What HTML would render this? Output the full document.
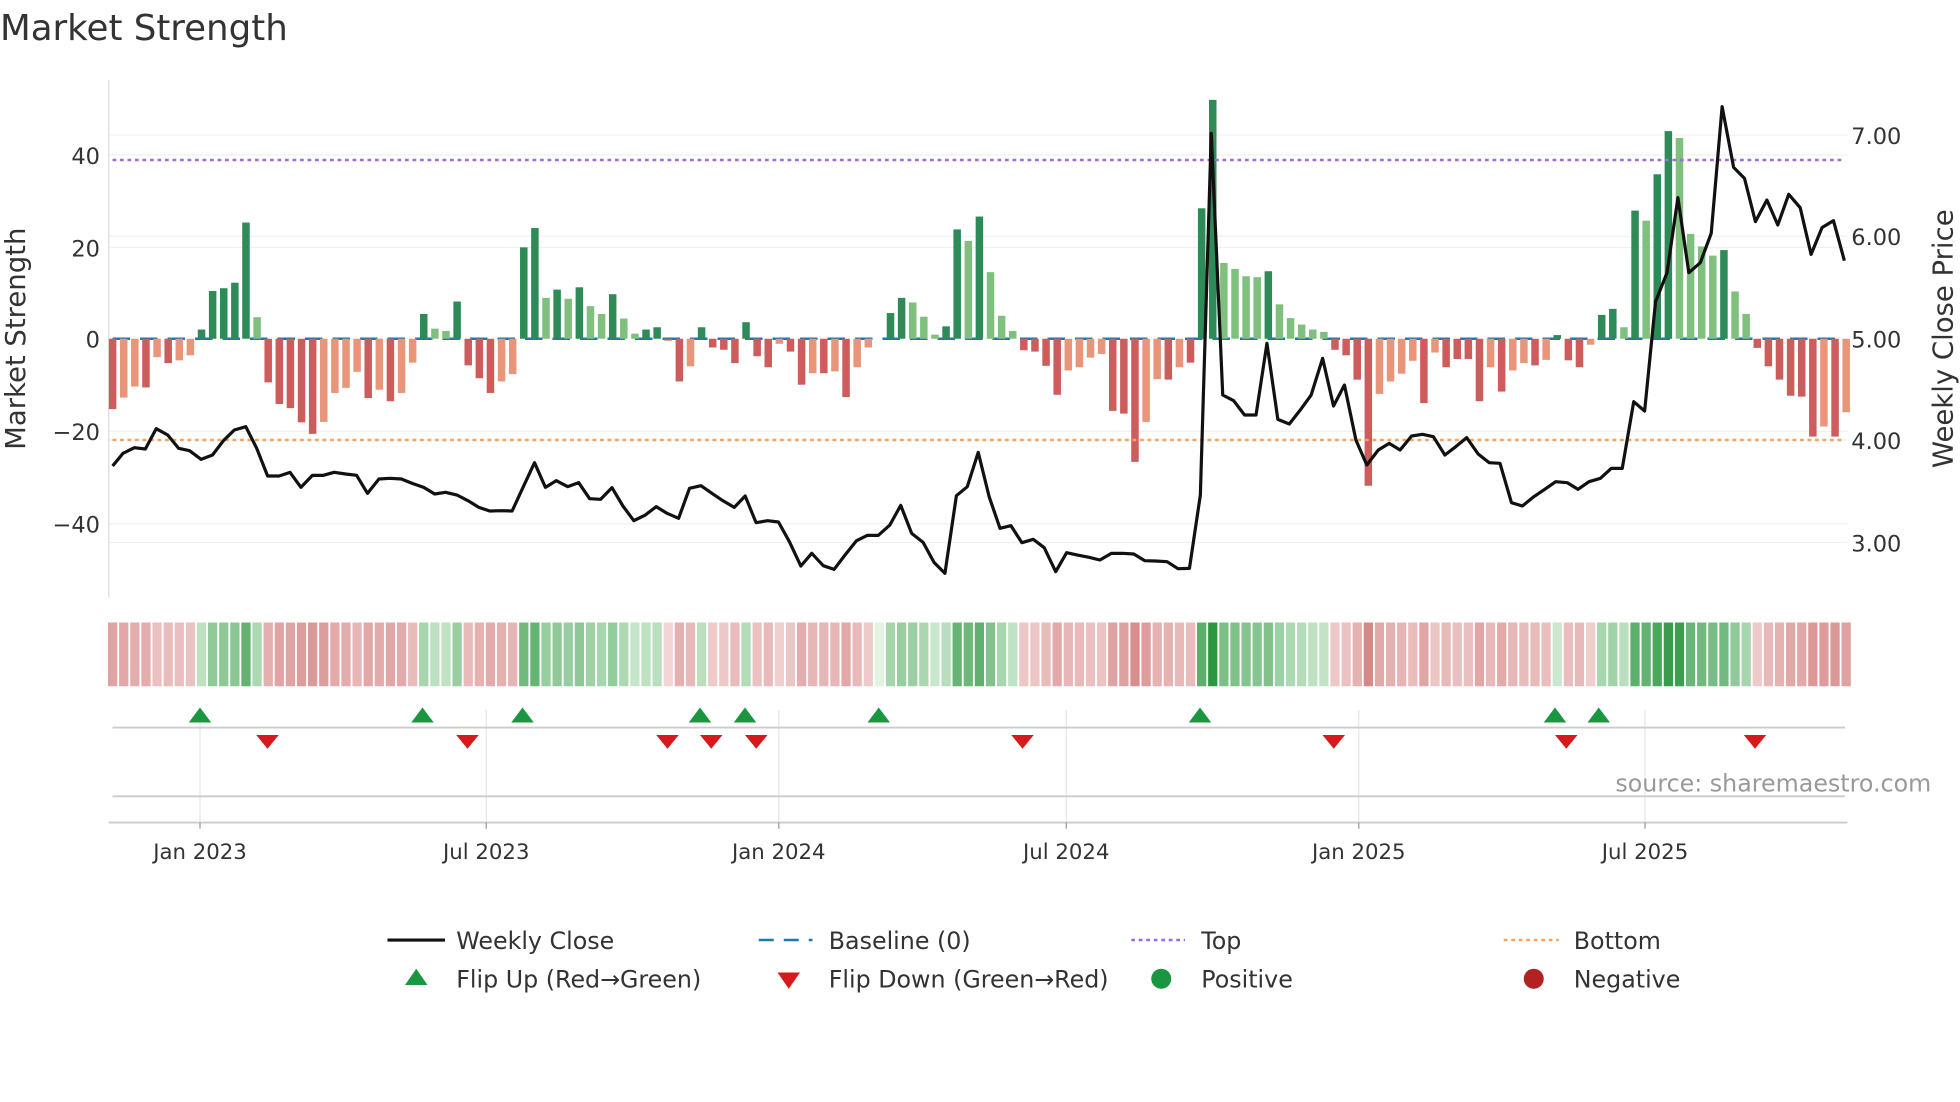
<!DOCTYPE html>
<html><head><meta charset="utf-8"><style>
html,body{margin:0;padding:0;background:#fff;}
svg{display:block;font-family:"DejaVu Sans","Liberation Sans",sans-serif;}
</style></head><body>
<svg id="s" width="1960" height="1102" viewBox="0 0 1568 881.6" xmlns="http://www.w3.org/2000/svg">
<text x="0" y="32" font-size="28.5" fill="#333">Market Strength</text>
<g stroke="#eef0f3" stroke-width="1">
<line x1="87" x2="1478" y1="124" y2="124"/><line x1="87" x2="1478" y1="198" y2="198"/>
<line x1="87" x2="1478" y1="345" y2="345"/><line x1="87" x2="1478" y1="419" y2="419"/>
<line x1="87" x2="1478" y1="189" y2="189"/><line x1="87" x2="1478" y1="352" y2="352"/>
<line x1="87" x2="1478" y1="434" y2="434"/><line x1="87" x2="1478" y1="108" y2="108"/>
</g>
<line x1="87" x2="87" y1="64" y2="478" stroke="#ddd"/>
<g font-size="18" fill="#333" text-anchor="end">
<text x="80" y="131">40</text><text x="80" y="205">20</text><text x="80" y="278">0</text>
<text x="80" y="352">−20</text><text x="80" y="426">−40</text></g>
<g font-size="18" fill="#333">
<text x="1481" y="115">7.00</text><text x="1481" y="196">6.00</text><text x="1481" y="278">5.00</text>
<text x="1481" y="359">4.00</text><text x="1481" y="441">3.00</text></g>
<text transform="translate(20,271) rotate(-90)" font-size="22" fill="#333" text-anchor="middle">Market Strength</text>
<text transform="translate(1562,271) rotate(-90)" font-size="22" fill="#333" text-anchor="middle">Weekly Close Price</text>
<line x1="90" x2="1476" y1="271" y2="271" stroke="#1f77b4" stroke-width="2" stroke-dasharray="14,8"/>
<g id="bars"></g>
<line x1="90" x2="1476" y1="128" y2="128" stroke="#9b6be0" stroke-width="2" stroke-dasharray="3,3"/>
<line x1="90" x2="1476" y1="352" y2="352" stroke="#f4a460" stroke-width="2" stroke-dasharray="3,3"/>
<g fill="none" stroke="#111" stroke-width="3.2" stroke-linejoin="round">
<polyline transform="translate(80,64) scale(0.4592,0.26667)" vector-effect="non-scaling-stroke" points="22,1158 40,1120 60,1103 79,1107 98,1046 118,1065 137,1105 156,1112 176,1138 196,1125 215,1082 234,1050 254,1040 273,1105 292,1188 312,1188 331,1177 350,1222 370,1186 389,1186 408,1177 428,1182 447,1186 466,1240 486,1197 505,1195 525,1197 544,1210 564,1222 583,1242 602,1237 622,1245 641,1262 660,1282 679,1293 699,1292 718,1293 737,1222 757,1148 776,1222 795,1202 815,1220 834,1208 853,1256 872,1258 892,1223 911,1278 930,1322 950,1305 969,1280 988,1300 1008,1315 1027,1225 1047,1217 1066,1240 1085,1262 1105,1282 1124,1248 1143,1328 1163,1322 1182,1326 1201,1385 1221,1458 1240,1420 1260,1457 1279,1468 1298,1425 1318,1382 1337,1366 1356,1366 1376,1335 1395,1276 1414,1360 1434,1387 1453,1447 1472,1480 1492,1247 1511,1220 1530,1117 1549,1250 1568,1345 1587,1337 1606,1388 1626,1378 1645,1403 1665,1475 1684,1418 1703,1425 1723,1432 1742,1440 1762,1420 1781,1420 1801,1422 1820,1442 1839,1443 1859,1445 1878,1466 1898,1465 1917,1245 1936,160 1956,945 1975,962 1994,1005 2014,1005 2033,790 2052,1018 2072,1032 2091,990 2110,945 2130,835 2149,978 2168,915 2188,1080 2207,1155 2227,1110 2246,1090 2265,1110 2285,1068 2304,1063 2323,1070 2343,1125 2362,1100 2381,1073 2401,1122 2420,1148 2439,1150 2459,1268 2478,1278 2498,1250 2517,1228 2536,1205 2556,1208 2575,1228 2594,1205 2614,1195 2633,1165 2652,1165 2672,965 2691,993 2710,665 2730,578 2749,353 2768,578 2788,548 2807,460 2826,80 2846,262 2865,295 2884,425 2904,360 2923,435 2942,343 2962,383 2981,523 3000,443 3020,422 3039,542"/>
</g>
<g id="heat"></g>
<g stroke="#e6e6e6" stroke-width="1">
<line x1="160" x2="160" y1="568" y2="658"/><line x1="389" x2="389" y1="568" y2="658"/>
<line x1="623" x2="623" y1="568" y2="658"/><line x1="853" x2="853" y1="568" y2="658"/>
<line x1="1087" x2="1087" y1="568" y2="658"/><line x1="1316" x2="1316" y1="568" y2="658"/>
</g>
<line x1="90" x2="1476" y1="582" y2="582" stroke="#ccc" stroke-width="1.5"/>
<line x1="90" x2="1476" y1="637" y2="637" stroke="#ccc" stroke-width="1.5"/>
<line x1="87" x2="1478" y1="658" y2="658" stroke="#ccc" stroke-width="1.5"/>
<g id="flips"></g>
<text x="1545" y="633" font-size="19" fill="#999" text-anchor="end">source: sharemaestro.com</text>
<g stroke="#999"><line x1="160" x2="160" y1="658" y2="663"/><line x1="389" x2="389" y1="658" y2="663"/><line x1="623" x2="623" y1="658" y2="663"/><line x1="853" x2="853" y1="658" y2="663"/><line x1="1087" x2="1087" y1="658" y2="663"/><line x1="1316" x2="1316" y1="658" y2="663"/></g>
<g font-size="17" fill="#333" text-anchor="middle">
<text x="160" y="687">Jan 2023</text><text x="389" y="687">Jul 2023</text><text x="623" y="687">Jan 2024</text>
<text x="853" y="687">Jul 2024</text><text x="1087" y="687">Jan 2025</text><text x="1316" y="687">Jul 2025</text></g>
<g font-size="19" fill="#333">
<line x1="310" x2="356" y1="752" y2="752" stroke="#111" stroke-width="2.5"/><text x="365" y="759">Weekly Close</text>
<line x1="607" x2="650" y1="752" y2="752" stroke="#1f77b4" stroke-width="2" stroke-dasharray="12,8"/><text x="663" y="759">Baseline (0)</text>
<line x1="905" x2="948" y1="752" y2="752" stroke="#9b6be0" stroke-width="2" stroke-dasharray="3,3"/><text x="961" y="759">Top</text>
<line x1="1203" x2="1247" y1="752" y2="752" stroke="#f4a460" stroke-width="2" stroke-dasharray="3,3"/><text x="1259" y="759">Bottom</text>
<polygon points="324,788 342,788 333,775" fill="#1a9641"/><text x="365" y="790">Flip Up (Red→Green)</text>
<polygon points="622,778 640,778 631,791" fill="#d7191c"/><text x="663" y="790">Flip Down (Green→Red)</text>
<circle cx="929" cy="783" r="8" fill="#1a9641"/><text x="961" y="790">Positive</text>
<circle cx="1227" cy="783" r="8" fill="#b22222"/><text x="1259" y="790">Negative</text>
</g>
</svg>
<script>
var V=[-15.3,-12.8,-10.4,-10.6,-4,-5.3,-4.7,-3.6,2,10.4,11,12.2,25.3,4.7,-9.5,-14.2,-15.1,-18.2,-20.7,-18.1,-11.8,-10.7,-7.2,-12.9,-11.1,-13.6,-11.8,-5.2,5.4,2.2,1.7,8.1,-5.8,-8.6,-11.8,-9.3,-7.7,19.9,24.1,8.9,10.7,8.7,11.2,7.1,5.4,9.7,4.4,1.1,2,2.5,-0.4,-9.3,-6,2.5,-1.9,-2.4,-5.3,3.6,-3.8,-6.2,-1.1,-2.8,-10,-7.5,-7.5,-7.1,-12.7,-6.2,-1.9,0,5.6,8.9,7.9,4.8,0.9,2.7,23.8,21.3,26.6,14.5,5,1.7,-2.5,-2.8,-5.9,-12.2,-6.9,-6.2,-4.1,-3.3,-15.7,-16.3,-26.8,-18.1,-8.8,-8.9,-6.2,-5.2,28.4,52,16.5,15.2,13.6,13.4,14.7,7.5,4.5,3.1,2,1.5,-2.4,-3.6,-8.9,-32,-12,-9.3,-7.6,-4.8,-14,-3,-6.2,-4.4,-4.4,-13.6,-6.2,-11.5,-6.9,-5.3,-5.8,-4.6,0.8,-4.7,-6.2,-1.3,5.2,6.5,2.5,27.9,25.7,35.8,45.2,43.7,22.8,20.1,18.1,19.3,10.3,5.4,-2,-6,-8.9,-12.4,-12.6,-21.3,-19.1,-21.3,-16];
var L={1:1,2:1,4:1,6:1,7:1,13:1,19:1,20:1,21:1,22:1,24:1,26:1,27:1,29:1,30:1,35:1,36:1,39:1,41:1,43:1,44:1,46:1,47:1,52:1,60:1,63:1,65:1,67:1,68:1,72:1,73:1,74:1,77:1,79:1,80:1,81:1,86:1,87:1,88:1,89:1,93:1,94:1,96:1,100:1,101:1,102:1,103:1,105:1,106:1,107:1,108:1,109:1,114:1,115:1,116:1,117:1,119:1,124:1,126:1,127:1,129:1,133:1,136:1,138:1,141:1,142:1,143:1,144:1,146:1,147:1,154:1,156:1};
var ns="http://www.w3.org/2000/svg";
function el(p,t,a){var e=document.createElementNS(ns,t);for(var k in a)e.setAttribute(k,a[k]);p.appendChild(e);return e;}
var B=document.getElementById('bars'),H=document.getElementById('heat');
function mix(a,b,t){return 'rgb('+a.map(function(x,i){return Math.round(x+(b[i]-x)*t)}).join(',')+')';}
for(var i=0;i<V.length;i++){var v=V[i],x=90.1+8.89*i,h=Math.abs(v)*3.675;
var c=v>=0?(L[i]?'#80c07f':'#2e8b57'):(L[i]?'#e8957a':'#cd5c5c');
if(h>0.3)el(B,'rect',{x:x-3,y:v>=0?271-h:271,width:6,height:h,fill:c});
var t=Math.min(1,Math.sqrt(Math.abs(v)/52));
var hc=v>=0?mix([225,243,225],[45,150,65],t):mix([246,224,224],[205,110,110],t);
el(H,'rect',{x:x-3.7,y:498,width:7.4,height:51,fill:hc});}
var F=document.getElementById('flips');
[160,338,418,560,596,703,960,1244,1279].forEach(function(x){el(F,'polygon',{points:(x-9)+',578 '+(x+9)+',578 '+x+',566',fill:'#1a9641'});});
[214,374,534,569,605,818,1067,1253,1404].forEach(function(x){el(F,'polygon',{points:(x-9)+',588 '+(x+9)+',588 '+x+',599',fill:'#d7191c'});});
</script>
</body></html>
